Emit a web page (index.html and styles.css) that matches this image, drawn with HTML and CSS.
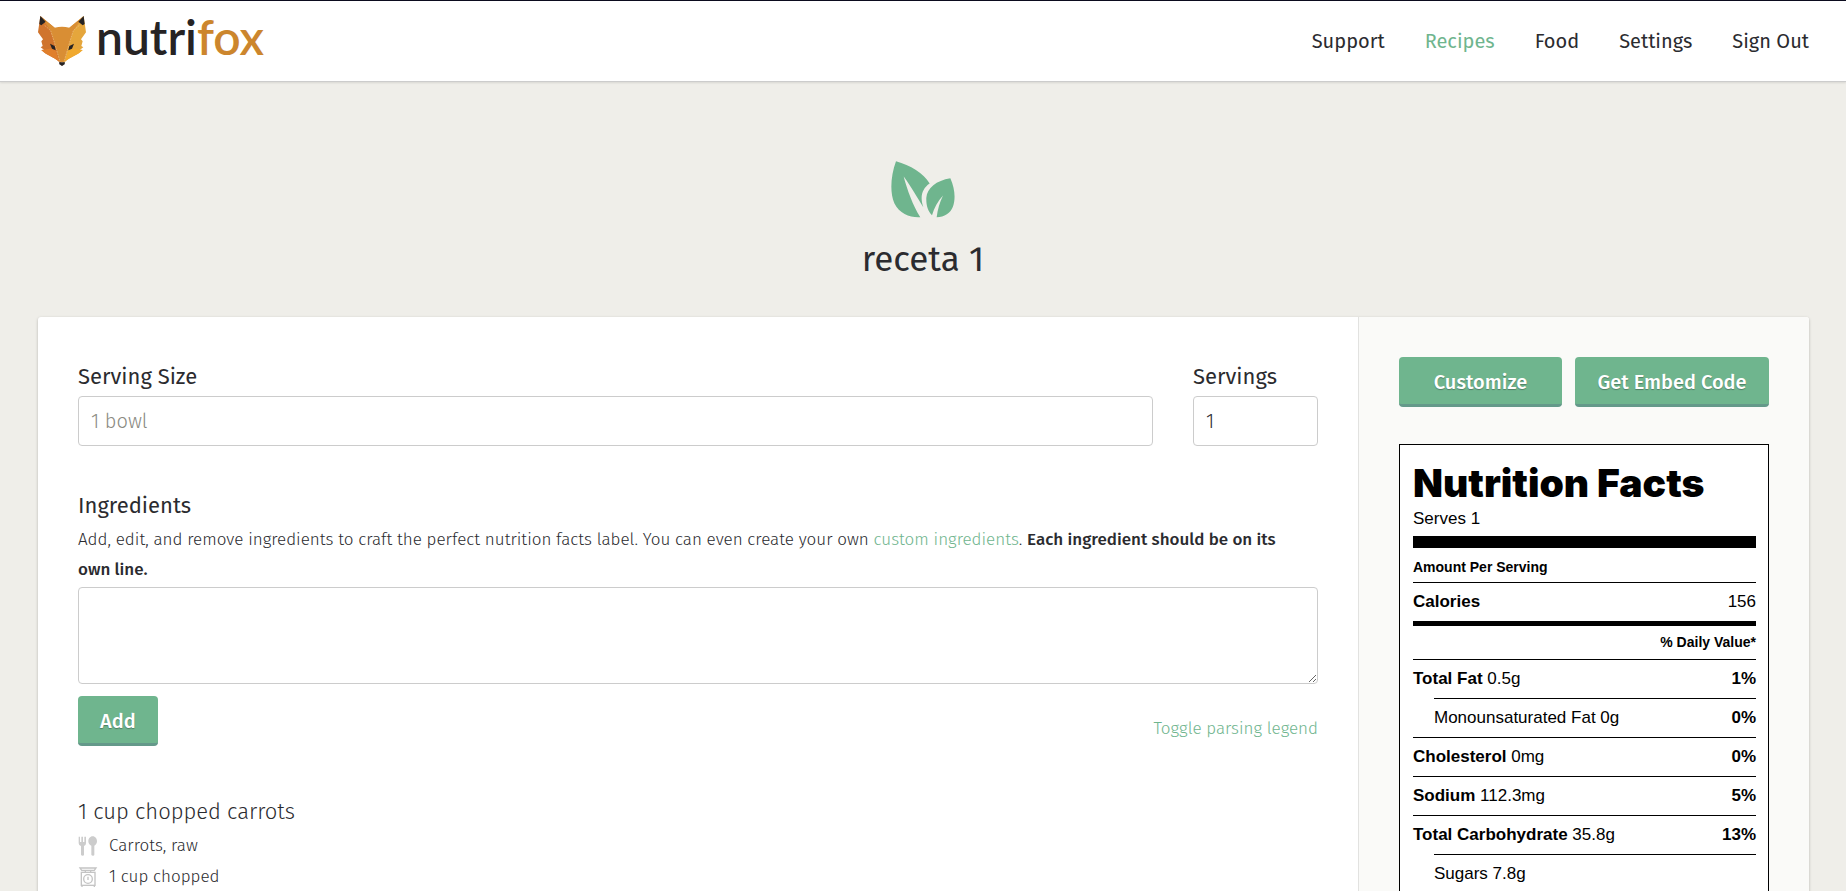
FILE: index.html
```html
<!DOCTYPE html>
<html lang="en">
<head>
  <meta charset="UTF-8" />
  <meta name="viewport" content="width=device-width, initial-scale=1.0" />
  <title>receta 1 | Nutrifox</title>
  <link rel="stylesheet" href="styles.css">
</head>
<body>
  <header class="header">
    <a class="logo" href="#">
      <svg class="logo-fox" viewBox="0 0 144 150" aria-hidden="true">
        <path fill="#d0742d" d="M7 0 L50 35 L72 150 L64 138 C48 122 28 120 10 102 L18 101 L8 94 L14 90 L10 76 L15 70 L0 49 Z"/>
        <path fill="#e5a63c" d="M137 0 L94 35 L72 150 L80 138 C96 122 116 120 134 102 L126 101 L136 94 L130 90 L134 76 L129 70 L144 49 Z"/>
        <path fill="#e07f2c" d="M18 101 L50 95 L64 138 C48 122 28 120 10 102 Z"/>
        <path fill="#f0a92f" d="M126 101 L94 95 L80 138 C96 122 116 120 134 102 Z"/>
        <path fill="#d98e34" d="M7 0 L50 35 Q72 30 94 35 L137 0 L106 44 L97 72 L78 138 L66 138 L47 72 L38 44 Z"/>
        <path fill="none" stroke="#efc18a" stroke-width="2" stroke-dasharray="5 3" d="M20 28 L38 44 L47 72 L66 138 M124 28 L106 44 L97 72 L78 138"/>
        <path fill="#262324" d="M7 0 L23 17 L10 28 L4 24 Z M137 0 L121 17 L134 28 L140 24 Z"/>
        <path fill="#262324" d="M36 83 L50 90 L53 103 L42 98 Z M108 83 L94 90 L91 103 L102 98 Z"/>
        <path fill="#262324" d="M63 139 L81 139 L80 145 L72 150 L64 145 Z"/>
      </svg>
      <span class="logo-text">nutri<span class="logo-accent">fox</span></span>
    </a>
    <nav class="nav">
      <a href="#">Support</a>
      <a class="active" href="#">Recipes</a>
      <a href="#">Food</a>
      <a href="#">Settings</a>
      <a href="#">Sign Out</a>
    </nav>
  </header>

  <div class="hero">
    <svg class="hero-icon" viewBox="0 0 192 170" aria-hidden="true">
      <path d="M15 0 C58 12 98 36 116 67 C93 82 86 108 97 138 C80 112 60 76 38 46 C48 84 66 134 88 168 C58 170 26 158 10 126 C-4 94 -1 44 15 0 Z"/>
      <path d="M178 51 C192 82 194 112 186 136 C179 156 160 168 137 168 C140 144 146 124 156 103 C140 120 130 140 123 162 C110 150 105 130 106 110 C108 80 136 58 178 51 Z"/>
    </svg>
    <h1>receta 1</h1>
  </div>

  <main class="card">
    <section class="editor">
      <div class="row">
        <div class="field">
          <label for="servingSize">Serving Size</label>
          <input type="text" id="servingSize" placeholder="1 bowl" />
        </div>
        <div class="field field-small">
          <label for="servings">Servings</label>
          <input type="text" id="servings" value="1" />
        </div>
      </div>

      <div class="field ingredients">
        <label for="ingredients">Ingredients</label>
        <p class="help">Add, edit, and remove ingredients to craft the perfect nutrition facts label. You can even create your own <a href="#">custom ingredients</a>. <strong>Each ingredient should be on its own&nbsp;line.</strong></p>
        <textarea id="ingredients"></textarea>
      </div>
      <div class="actions">
        <button class="btn" type="button">Add</button>
        <a href="#">Toggle parsing legend</a>
      </div>

      <div class="ingredient">
        <h2>1 cup chopped carrots</h2>
        <ul>
          <li>
            <svg viewBox="0 0 60 60" aria-hidden="true">
              <path fill="#ccc" d="M2 2 h4 v16 h4 V2 h5 v16 h4 V2 h5 v20 q0 6 -6 8 v26 q0 3 -4 3 t-5 -3 V30 q-7 -2 -7 -8 Z"/>
              <path fill="#ccc" d="M44 1 C52 1 57 8 57 16 C57 23 53 27 49 29 V56 q0 3 -4 3 t-5 -3 V29 C35 27 31 23 31 16 C31 8 36 1 44 1 Z"/>
            </svg>
            Carrots, raw
          </li>
          <li>
            <svg viewBox="0 0 60 60" aria-hidden="true" fill="none" stroke="#c4c4c4" stroke-width="4">
              <path d="M6 3 H54 L49 10 H11 Z M22 10 V16 M38 10 V16"/>
              <rect x="10" y="16" width="41" height="39"/>
              <circle cx="30" cy="36" r="13"/>
              <path d="M30 29 V39 M12 55 V60 M49 55 V60"/>
            </svg>
            1 cup chopped
          </li>
        </ul>
      </div>
    </section>

    <aside class="sidebar">
      <div class="buttons">
        <button class="btn" type="button">Customize</button>
        <button class="btn" type="button">Get Embed Code</button>
      </div>

      <div class="facts">
        <h2>Nutrition Facts</h2>
        <p class="serves">Serves 1</p>
        <p class="amount">Amount Per Serving</p>
        <table>
          <tbody>
            <tr class="calories"><th>Calories</th><td>156</td></tr>
            <tr class="daily"><th colspan="2">% Daily Value*</th></tr>
            <tr><th>Total Fat <span>0.5g</span></th><td><b>1%</b></td></tr>
            <tr class="sub"><th>Monounsaturated Fat 0g</th><td><b>0%</b></td></tr>
            <tr><th>Cholesterol <span>0mg</span></th><td><b>0%</b></td></tr>
            <tr><th>Sodium <span>112.3mg</span></th><td><b>5%</b></td></tr>
            <tr><th>Total Carbohydrate <span>35.8g</span></th><td><b>13%</b></td></tr>
            <tr class="sub"><th>Sugars 7.8g</th><td></td></tr>
          </tbody>
        </table>
      </div>
    </aside>
  </main>
</body>
</html>
```
FILE: styles.css
```css
* {
  box-sizing: border-box;
}
body {
  margin: 0;
  background: #efeee9;
  color: #2b2b2f;
  font-family: "Fira Sans", "Noto Sans", sans-serif;
  font-size: 17px;
  font-weight: 300;
  line-height: 30px;
}
h1, h2, p, ul {
  margin: 0;
  padding: 0;
}
a {
  color: #6fb58e;
  text-decoration: none;
}

/* header */
.header {
  display: flex;
  align-items: center;
  justify-content: space-between;
  height: 82px;
  padding: 0 37px 0 38px;
  background: #fff;
  border-top: 1px solid #0b0b1e;
  border-bottom: 1px solid #ccc;
  box-shadow: 0 1px 2px rgba(0, 0, 0, 0.1);
}
.logo {
  display: flex;
  align-items: center;
  gap: 10px;
  color: #262324;
}
.logo-fox {
  width: 48px;
  height: 50px;
}
.logo-text {
  font-family: Lato, sans-serif;
  font-size: 48px;
  font-weight: 600;
  line-height: 56px;
  padding-bottom: 8px;
}
.logo-accent {
  color: #cc862d;
}
.nav {
  display: flex;
  gap: 40px;
}
.nav a {
  color: #2b2b2f;
  font-size: 20px;
  font-weight: 400;
}
.nav .active {
  color: #6fb58e;
}

/* title */
.hero {
  display: flex;
  flex-direction: column;
  align-items: center;
  padding: 79px 0 33px;
}
.hero-icon {
  width: 64px;
  height: 57px;
  fill: #6fb58e;
}
.hero h1 {
  margin-top: 16px;
  font-size: 35px;
  font-weight: 400;
  line-height: 50px;
}

/* card */
.card {
  display: flex;
  margin: 0 37px 0 38px;
  background: #fff;
  border-radius: 3px;
  box-shadow: 0 1px 3px rgba(0, 0, 0, 0.25);
}
.editor {
  flex: 1;
  padding: 40px;
}
.row {
  display: flex;
  gap: 40px;
}
.field {
  flex: 1;
}
.field-small {
  flex: 0 0 125px;
}
label {
  display: block;
  padding-top: 4px;
  font-size: 22px;
  font-weight: 400;
  line-height: 32px;
}
input,
textarea {
  display: block;
  width: 100%;
  height: 50px;
  margin-top: 3px;
  padding: 0 12px;
  background: #fff;
  border: 1px solid #ccc;
  border-radius: 4px;
  color: #2b2b2f;
  font: inherit;
  font-size: 20px;
}
input::placeholder {
  color: #8a8a82;
}
.ingredients {
  margin-top: 40px;
}
.help {
  padding-top: 3px;
}
textarea {
  height: 97px;
  margin-top: 2px;
}
strong {
  font-weight: 500;
}
.actions {
  display: flex;
  align-items: center;
  justify-content: space-between;
  margin-top: 12px;
}
.actions a {
  padding-top: 16px;
}
.btn {
  height: 50px;
  padding: 2px 22px 0;
  background: #6fb58e;
  border: 0;
  border-bottom: 3px solid #64998a;
  border-radius: 4px;
  color: #fff;
  font: inherit;
  font-size: 20px;
  font-weight: 500;
  text-shadow: 0 1px 1px rgba(0, 0, 0, 0.3);
  cursor: pointer;
}
.ingredient {
  margin-top: 48px;
}
.ingredient h2 {
  font-size: 22px;
  font-weight: 300;
  line-height: 36px;
}
.ingredient ul {
  list-style: none;
}
.ingredient li {
  display: flex;
  align-items: center;
  gap: 11px;
  line-height: 31px;
}
.ingredient svg {
  width: 20px;
  height: 20px;
}

/* sidebar */
.sidebar {
  flex: 0 0 451px;
  padding: 40px;
  background: #fafaf8;
  border-left: 1px solid #e2e2e0;
  border-radius: 0 3px 3px 0;
}
.buttons {
  display: grid;
  grid-template-columns: 1fr 194px;
  gap: 13px;
}
.facts {
  margin-top: 37px;
  padding: 13px 12px 13px 13px;
  background: #fff;
  border: 1px solid #000;
  color: #000;
  font-family: "Liberation Sans", Arial, sans-serif;
  font-weight: 400;
}
.facts h2 {
  font-family: Inter, sans-serif;
  font-size: 39px;
  font-weight: 900;
  line-height: 50px;
}
.serves {
  padding-bottom: 6px;
  border-bottom: 12px solid #000;
  line-height: 22px;
}
.amount {
  padding-top: 5px;
  font-size: 14px;
  font-weight: 700;
  line-height: 29px;
}
.facts table {
  display: block;
}
.facts tbody {
  display: block;
}
.facts tr {
  display: flex;
  justify-content: space-between;
  border-top: 1px solid #000;
  line-height: 38px;
}
.facts th,
.facts td {
  padding: 0;
  text-align: left;
}
.facts span,
.facts .sub th {
  font-weight: 400;
}
.facts .sub {
  margin-left: 21px;
}
.facts .daily {
  justify-content: flex-end;
  padding-bottom: 1px;
  border-top-width: 5px;
  font-size: 14px;
  line-height: 32px;
}
```
